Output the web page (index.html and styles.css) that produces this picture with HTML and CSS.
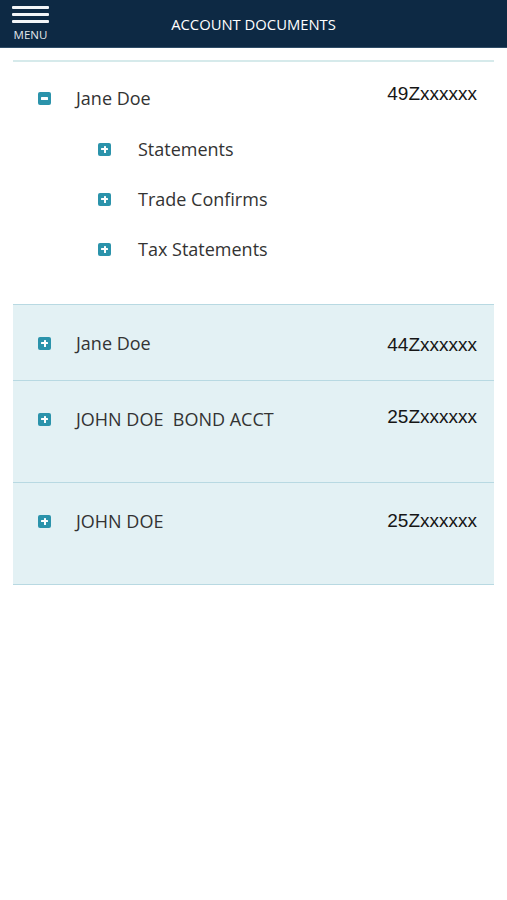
FILE: index.html
```html
<!DOCTYPE html>
<html>
<head>
<meta charset="utf-8">
<link rel="stylesheet" href="styles.css">
</head>
<body>
<header class="topbar">
  <div class="menu">
    <span class="bar"></span><span class="bar"></span><span class="bar"></span>
    <span class="menu-label">MENU</span>
  </div>
  <div class="title">ACCOUNT DOCUMENTS</div>
</header>
<main class="accounts">
  <section class="group open">
    <div class="row parent">
      <span class="icon minus"></span>
      <span class="name">Jane Doe</span>
      <span class="acct up">49Zxxxxxx</span>
    </div>
    <div class="sub">
      <div class="subrow"><span class="icon plus"></span><span class="name">Statements</span></div>
      <div class="subrow"><span class="icon plus"></span><span class="name">Trade Confirms</span></div>
      <div class="subrow"><span class="icon plus"></span><span class="name">Tax Statements</span></div>
    </div>
  </section>
  <section class="group closed short">
    <div class="row">
      <span class="icon plus"></span>
      <span class="name">Jane Doe</span>
      <span class="acct down">44Zxxxxxx</span>
    </div>
  </section>
  <section class="group closed">
    <div class="row">
      <span class="icon plus"></span>
      <span class="name">JOHN DOE&nbsp; BOND ACCT</span>
      <span class="acct up2">25Zxxxxxx</span>
    </div>
  </section>
  <section class="group closed">
    <div class="row">
      <span class="icon plus"></span>
      <span class="name">JOHN DOE</span>
      <span class="acct">25Zxxxxxx</span>
    </div>
  </section>
</main>
</body>
</html>
```
FILE: styles.css
```css
* { box-sizing: border-box; }
html, body { margin: 0; padding: 0; background: #ffffff; }
body { font-family: "Open Sans", "Liberation Sans", sans-serif; color: #333333; }

.topbar {
  height: 48px;
  background: #0d2944;
  border-bottom: 1px solid #2f4d68;
  display: flex;
  align-items: center;
  position: relative;
}
.menu {
  width: 37px;
  margin-left: 12px;
  display: flex;
  flex-direction: column;
  align-items: stretch;
  padding-top: 6px;
  align-self: flex-start;
}
.bar {
  display: block;
  height: 3px;
  background: #f2f5f8;
  margin-bottom: 4px;
  border-radius: 1px;
}
.menu-label {
  font-size: 11.5px;
  line-height: 12px;
  color: #e2e7ec;
  text-align: center;
  margin-top: 2px;
}
.title {
  flex: 1;
  text-align: center;
  color: #ffffff;
  font-size: 14.8px;
  line-height: 20px;
  margin-right: 49px;
  margin-top: 1px;
}

.accounts { margin: 12px 13px 0 13px; }

.group { border-bottom: 1px solid #b8d9e2; }
.group.open {
  border-top: 2px solid #d6eaeb;
  background: #ffffff;
  padding: 24px 0 30px 0;
}
.group.closed {
  background: #e3f1f4;
  height: 102px;
  padding-top: 26px;
}
.group.closed.short { height: 76px; }

.row {
  display: flex;
  align-items: center;
  padding: 0 17px 0 25px;
  height: 24px;
}
.icon {
  width: 13px;
  height: 13px;
  border-radius: 2px;
  background: #2b93ab;
  position: relative;
  flex: none;
  margin-right: 25px;
}
.icon::before, .icon::after {
  content: "";
  position: absolute;
  background: #ffffff;
  border-radius: 0.5px;
}
.icon::before { left: 3px; right: 3px; top: 5.5px; height: 2px; }
.plus::after { top: 3px; bottom: 3px; left: 5.5px; width: 2px; }
.minus::before { left: 3px; right: 3px; top: 5px; height: 3px; }

.name {
  font-size: 18px;
  line-height: 24px;
  color: #333333;
  flex: 1;
  white-space: nowrap;
}
.subrow .name { margin-left: 1px; }
.acct {
  font-family: "Liberation Sans", Arial, sans-serif;
  font-size: 19px;
  line-height: 24px;
  color: #161616;
}
.acct.up { margin-top: -9px; }
.acct.down { margin-top: 4px; }
.acct.up2 { margin-top: -4px; }

.sub { padding-top: 14px; }
.subrow {
  height: 50px;
  display: flex;
  align-items: center;
  padding-left: 85px;
}
.subrow .icon { margin-right: 26px; }
```
